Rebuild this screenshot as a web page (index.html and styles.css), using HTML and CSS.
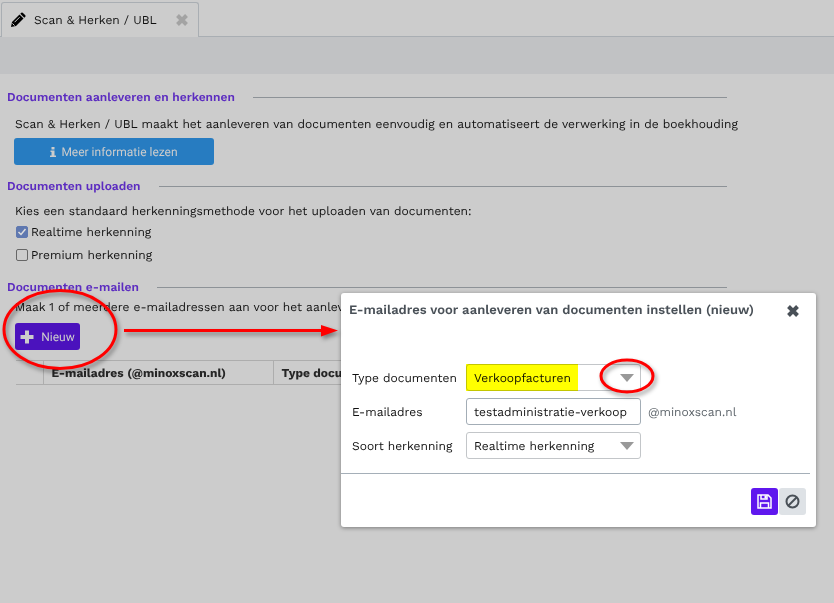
FILE: index.html
```html
<!DOCTYPE html>
<html lang="nl">
<head>
    <meta charset="utf-8">
    <title>Scan &amp; Herken / UBL</title>
    <link rel="stylesheet" href="styles.css">
</head>
<body>
    <nav class="tabs">
        <div class="tab">
            <svg class="tab-icon" width="16" height="16" viewBox="0 0 16 16"><path d="M1 15l1-5 7.500-7.500 4 4L6 14z"/><path d="M10.300 1.700l1-1q.7-.6 1.400 0l2.600 2.600q.6.700 0 1.400l-1 1z"/><path d="M2.400 11.400l2.200 2.200M4.600 10.200l5-5" stroke="#ccc" stroke-width="1"/></svg>
            <a href="#" class="tab-link">Scan &amp; Herken / UBL</a>
            <button class="tab-close" aria-label="Tabblad sluiten">
                <svg width="14" height="14" viewBox="0 0 14 14"><path d="M2.500 2.500l9 9M11.500 2.500l-9 9" stroke="#a3a3a3" stroke-width="4"/></svg>
            </button>
        </div>
    </nav>
    <div class="toolbar"></div>

    <main>
        <section>
            <h2>Documenten aanleveren en herkennen</h2>
            <p class="intro">Scan &amp; Herken / UBL maakt het aanleveren van documenten eenvoudig en automatiseert de verwerking in de boekhouding</p>
            <button class="btn btn-info">
                <svg width="6" height="10" viewBox="0 0 6 10"><path d="M1.500 0h3v2.500h-3zM.5 3.500h4V8.500H6V10H0V8.500h1.500V5H.5z" fill="#ccc"/></svg>
                Meer informatie lezen
            </button>
        </section>

        <section>
            <h2>Documenten uploaden</h2>
            <p class="method">Kies een standaard herkenningsmethode voor het uploaden van documenten:</p>
            <div class="check">
                <input type="checkbox" id="realtime" checked>
                <label for="realtime">Realtime herkenning</label>
            </div>
            <div class="check">
                <input type="checkbox" id="premium">
                <label for="premium">Premium herkenning</label>
            </div>
        </section>

        <section>
            <h2>Documenten e-mailen</h2>
            <p class="mail">Maak 1 of meerdere e-mailadressen aan voor het aanleveren</p>
            <button class="btn btn-new">
                <svg width="14" height="14" viewBox="0 0 14 14"><path d="M7 0.500v13M0.500 7h13" stroke="#ccc" stroke-width="4"/></svg>
                Nieuw
            </button>
            <table>
                <tr>
                    <th class="col-select"></th>
                    <th class="col-mail">E-mailadres (@minoxscan.nl)</th>
                    <th>Type docu</th>
                </tr>
            </table>
        </section>
    </main>

    <div class="modal" role="dialog" aria-labelledby="modalTitle">
        <div class="modal-header">
            <h3 id="modalTitle">E-mailadres voor aanleveren van documenten instellen (nieuw)</h3>
            <button class="modal-close" aria-label="Sluiten">
                <svg width="14" height="14" viewBox="0 0 14 14"><path d="M2.500 2.500l9 9M11.500 2.500l-9 9" stroke="#495057" stroke-width="4"/></svg>
            </button>
        </div>
        <form class="modal-form">
            <label for="type">Type documenten</label>
            <div class="select marked">
                <select id="type"><option>Verkoopfacturen</option></select>
            </div>
            <span></span>

            <label for="email">E-mailadres</label>
            <input type="text" id="email" value="testadministratie-verkoop">
            <span class="domain">@minoxscan.nl</span>

            <label for="soort">Soort herkenning</label>
            <div class="select">
                <select id="soort"><option>Realtime herkenning</option></select>
            </div>
        </form>
        <div class="modal-footer">
            <button class="icon-btn save" aria-label="Opslaan">
                <svg width="15" height="15" viewBox="0 0 15 15" fill="none" stroke="#fff" stroke-width="1.500"><path d="M1 1h10l3 3v10H1z"/><path d="M4 1v4h6V1M3.500 14V9h8v5"/><path d="M7.500 1.500h2v3h-2z" fill="#fff" stroke="none"/></svg>
            </button>
            <button class="icon-btn cancel" aria-label="Annuleren">
                <svg width="15" height="15" viewBox="0 0 15 15" fill="none" stroke="#495057" stroke-width="2"><circle cx="7.500" cy="7.500" r="6"/><path d="M3.500 11.500l8-8"/></svg>
            </button>
        </div>
    </div>

    <!-- Red markers -->
    <svg class="marker marker-new" width="350" height="100" viewBox="0 0 350 100">
        <ellipse cx="60" cy="49.500" rx="56" ry="39" fill="none" stroke="#f00" stroke-width="3"/>
        <path d="M124 50.500h198" stroke="#f00" stroke-width="3"/>
        <path d="M321 45l17 5.500-17 6z" fill="#f00"/>
    </svg>
    <svg class="marker marker-select" width="70" height="50" viewBox="0 0 70 50">
        <ellipse cx="35" cy="25" rx="26" ry="16" fill="none" stroke="#f00" stroke-width="3"/>
    </svg>
</body>
</html>
```

FILE: styles.css
```css
* {
    box-sizing: border-box;
}
body {
    margin: 0;
    min-height: 100vh;
    position: relative;
    overflow-x: hidden;
    font-family: 'Work Sans', Inter, sans-serif;
    font-size: 12px;
    line-height: 16px;
    text-rendering: geometricPrecision;
    color: #111;
    background-color: #ccc;
}
h2, h3, p {
    margin: 0;
}
button, input, select {
    font-family: inherit;
    font-size: inherit;
    margin: 0;
    text-rendering: inherit;
}
button {
    border: none;
    padding: 0;
    background: none;
    cursor: pointer;
}
svg {
    display: block;
}
.tabs {
    display: flex;
    height: 37px;
    padding: 2px 1px 0;
    border-bottom: 1px solid #a9aeb3;
}
.tab {
    display: flex;
    align-items: center;
    height: 35px;
    padding: 0 9px 0 8px;
    border: 1px solid #a9aeb3;
    border-bottom: none;
    border-radius: 3px 3px 0 0;
    background-color: #ccc;
}
.tab-icon {
    margin-right: 8px;
}
.tab-link {
    color: #111;
    text-decoration: none;
}
.tab-close {
    margin-left: 18px;
}
.toolbar {
    height: 37px;
    background-color: #c1c2c4;
}
main {
    padding: 15px 107px 0 7px;
}
section {
    padding-bottom: 13px;
}
h2 {
    display: flex;
    align-items: center;
    gap: 18px;
    font-size: 12px;
    line-height: 16px;
    font-weight: 600;
    color: #5c2cc0;
}
h2::after {
    content: "";
    flex: 1;
    height: 1px;
    background-color: #8d9297;
}
p {
    padding-left: 8px;
    white-space: nowrap;
}
.intro {
    margin: 11px 0 6px;
}
.method {
    margin: 9px 0 2px;
}
.mail {
    margin: 4px 0 8px;
}
.btn {
    display: flex;
    align-items: center;
    justify-content: center;
    height: 27px;
    border-radius: 3px;
    color: #ccc;
    font-family: Roboto, sans-serif;
}
.btn-info {
    width: 200px;
    margin-left: 7px;
    gap: 5px;
    background-color: #277cc1;
}
.btn-new {
    width: 65px;
    margin-left: 8px;
    gap: 7px;
    background-color: #4b12bd;
}
.check {
    display: flex;
    align-items: center;
    gap: 3px;
    height: 22px;
    padding-left: 9px;
}
.check:last-child {
    height: 23px;
}
.check input {
    appearance: none;
    width: 12px;
    height: 12px;
    border: 1px solid #666;
    border-radius: 2px;
}
.check input:checked {
    border-color: #5f78b0;
    background: #5f78b0 url("data:image/svg+xml,%3Csvg xmlns='http://www.w3.org/2000/svg' viewBox='0 0 10 10'%3E%3Cpath d='M1.500 5l2.500 2.500 4.500-5.500' fill='none' stroke='%23ddd' stroke-width='1.500'/%3E%3C/svg%3E") center / 10px;
}
table {
    width: 100%;
    margin: 10px 0 0 9px;
    border-collapse: collapse;
}
th {
    height: 24px;
    padding: 0 8px;
    border: solid #adadad;
    border-width: 1px 0 1px 1px;
    text-align: left;
    font-weight: 700;
    color: #262626;
}
.col-select {
    width: 27px;
    border-left: none;
}
.col-mail {
    width: 230px;
}
.modal {
    position: absolute;
    top: 293px;
    right: 18px;
    width: 475px;
    border-radius: 3px;
    background-color: #fff;
    box-shadow: 0 1px 4px rgba(0, 0, 0, 0.4);
}
.modal-header {
    display: flex;
    align-items: center;
    justify-content: space-between;
    padding: 10px 16px 0 8px;
}
.modal-header h3 {
    font-size: 13px;
    line-height: 16px;
    font-weight: 600;
    color: #495057;
}
.modal-form {
    display: grid;
    grid-template-columns: 107px 175px 1fr;
    gap: 7px;
    align-items: center;
    margin-right: 6px;
    padding: 45px 0 14px 11px;
    border-bottom: 1px solid #a5afb8;
}
.modal-form input, .modal-form select {
    display: block;
    width: 100%;
    height: 27px;
    padding: 0 7px;
    border: 1px solid #c3c6c9;
    border-radius: 3px;
    background-color: #fff;
    color: #111;
}
.modal-form input {
    border-color: #a3adb6;
}
.modal-form select {
    appearance: none;
}
.select {
    position: relative;
}
.select::after {
    content: "";
    position: absolute;
    top: 10px;
    right: 7px;
    border: 7px solid transparent;
    border-top: 8px solid #999;
    border-bottom: none;
    pointer-events: none;
}
/* Highlighter over the selected type */
.marked::before {
    content: "";
    position: absolute;
    z-index: 1;
    inset: 0 auto 0 0;
    width: 112px;
    background-color: #ff0;
    mix-blend-mode: multiply;
    pointer-events: none;
}
.domain {
    color: #5f666c;
}
.modal-footer {
    display: flex;
    justify-content: flex-end;
    gap: 1px;
    padding: 14px 10px 12px;
}
.icon-btn {
    display: flex;
    align-items: center;
    justify-content: center;
    width: 27px;
    height: 27px;
    border-radius: 3px;
}
.save {
    background-color: #5f17ee;
}
.cancel {
    background-color: #dee2e6;
}
.marker {
    position: absolute;
    pointer-events: none;
    filter: drop-shadow(2px 3px 2px rgba(0, 0, 0, 0.4));
}
.marker-new {
    top: 280px;
    left: 0;
}
.marker-select {
    top: 351px;
    right: 172px;
}
```
